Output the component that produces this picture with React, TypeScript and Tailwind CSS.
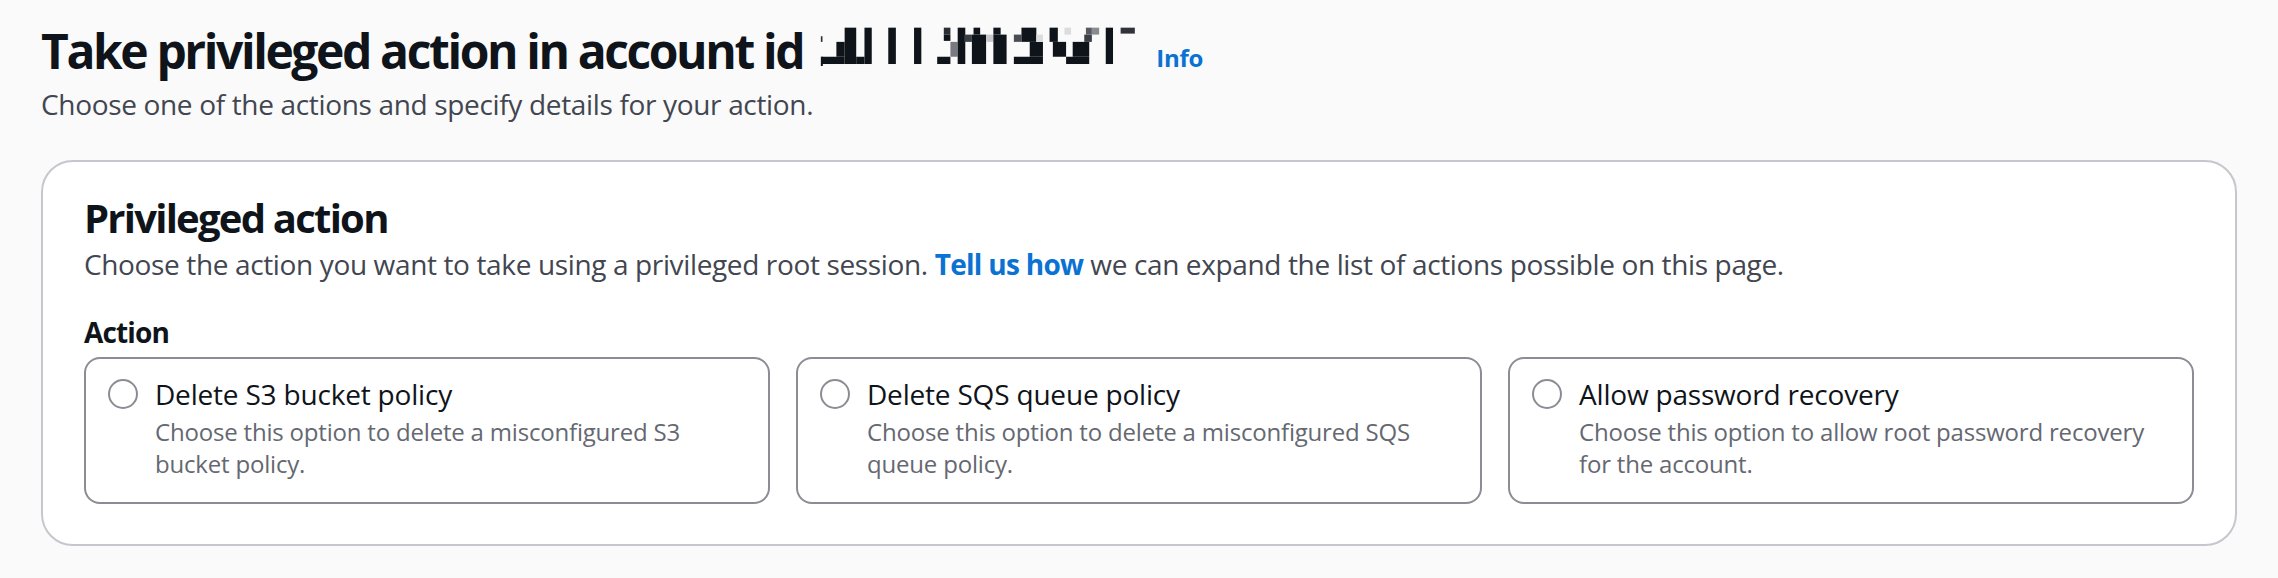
const tiles = [
  {
    title: "Delete S3 bucket policy",
    desc: "Choose this option to delete a misconfigured S3 bucket policy.",
  },
  {
    title: "Delete SQS queue policy",
    desc: "Choose this option to delete a misconfigured SQS queue policy.",
  },
  {
    title: "Allow password recovery",
    desc: "Choose this option to allow root password recovery for the account.",
  },
]

// pixelated redaction over the account id
const blocks: [number, number, number, number, string][] = [
  [28, 38, 33, 55, "#2b2f36"],
  [28, 100, 34, 130, "#0f141a"],
  [30, 100, 100, 122, "#0f141a"],
  [75, 55, 100, 100, "#0f141a"],
  [100, 12, 135, 122, "#0f141a"],
  [135, 100, 160, 122, "#0f141a"],
  [160, 12, 182, 122, "#0f141a"],
  [232, 12, 255, 122, "#0f141a"],
  [310, 12, 332, 122, "#0f141a"],
  [380, 100, 420, 122, "#0f141a"],
  [400, 12, 420, 33, "#2a2e35"],
  [400, 33, 420, 52, "#0f141a"],
  [420, 55, 442, 100, "#777a80"],
  [442, 12, 465, 122, "#0f141a"],
  [462, 33, 485, 55, "#3a3e45"],
  [485, 33, 528, 122, "#0f141a"],
  [490, 12, 510, 33, "#0f141a"],
  [528, 33, 550, 55, "#c8c8cc"],
  [550, 33, 590, 122, "#0f141a"],
  [550, 12, 572, 33, "#0f141a"],
  [612, 33, 635, 55, "#4a4d55"],
  [635, 12, 680, 55, "#0f141a"],
  [660, 55, 700, 100, "#0f141a"],
  [612, 100, 700, 122, "#0f141a"],
  [680, 33, 700, 55, "#dcdcdf"],
  [720, 12, 745, 55, "#0f141a"],
  [730, 55, 770, 100, "#0f141a"],
  [765, 12, 785, 33, "#dcdcdf"],
  [770, 100, 840, 122, "#0f141a"],
  [790, 55, 840, 100, "#0f141a"],
  [825, 33, 848, 55, "#3a3e45"],
  [830, 12, 848, 33, "#555960"],
  [848, 12, 870, 33, "#888b91"],
  [890, 12, 912, 122, "#0f141a"],
  [935, 12, 978, 30, "#30333a"],
]

function Redacted({ className }: { className?: string }) {
  return (
    <svg className={className} width="323" height="39" viewBox="20 10 970 118" aria-hidden="true">
      {blocks.map(([x1, y1, x2, y2, fill], i) => (
        <rect key={i} x={x1} y={y1} width={x2 - x1} height={y2 - y1} fill={fill} />
      ))}
    </svg>
  )
}

export default function App() {
  return (
    <div className="min-h-screen bg-[#fafafa] px-[41px] pt-[21px] font-['Open_Sans',sans-serif] text-[#0f141a] tracking-[-0.012em]">
      <div className="flex items-start">
        <h1 className="text-[48px] leading-[60px] font-bold tracking-[-0.05em]">
          Take privileged action in account id
        </h1>
        <Redacted className="ml-[14px] mt-[6px] shrink-0" />
        <a href="#" className="ml-[16px] mt-[21px] text-[24px] leading-[32px] font-bold text-[#0972d3]">
          Info
        </a>
      </div>
      <p className="mt-[3px] text-[28px] leading-[40px] text-[#424650] tracking-[-0.012em]">
        Choose one of the actions and specify details for your action.
      </p>

      <section className="mt-[36px] rounded-[32px] border-2 border-[#c6c6cd] bg-white px-[41px] pt-[32px] pb-[40px]">
        <h2 className="text-[40px] leading-[48px] font-bold tracking-[-0.044em]">Privileged action</h2>
        <p className="mt-[2px] text-[28px] leading-[40px] text-[#424650] tracking-[-0.013em]">
          Choose the action you want to take using a privileged root session.{" "}
          <a href="#" className="font-bold text-[#0972d3] tracking-[-0.025em]">
            Tell us how
          </a>{" "}
          we can expand the list of actions possible on this page.
        </p>

        <div className="mt-[28px] text-[28px] leading-[40px] font-bold tracking-[-0.03em]">Action</div>
        <div className="mt-[5px] grid grid-cols-3 gap-[26px]">
          {tiles.map((t) => (
            <label
              key={t.title}
              className="flex rounded-[16px] border-2 border-[#8c8c94] pt-[15px] pr-[24px] pb-[22px] pl-[21px]"
            >
              <span className="flex h-[40px] w-[32px] shrink-0 items-center justify-center">
                <span className="h-[30px] w-[30px] rounded-full border-2 border-[#8c8c94] bg-white" />
              </span>
              <span className="ml-[16px] flex flex-col">
                <span className="text-[28px] leading-[40px]">{t.title}</span>
                <span className="mt-[2px] text-[24px] leading-[32px] text-[#656871]">{t.desc}</span>
              </span>
            </label>
          ))}
        </div>
      </section>
    </div>
  )
}
